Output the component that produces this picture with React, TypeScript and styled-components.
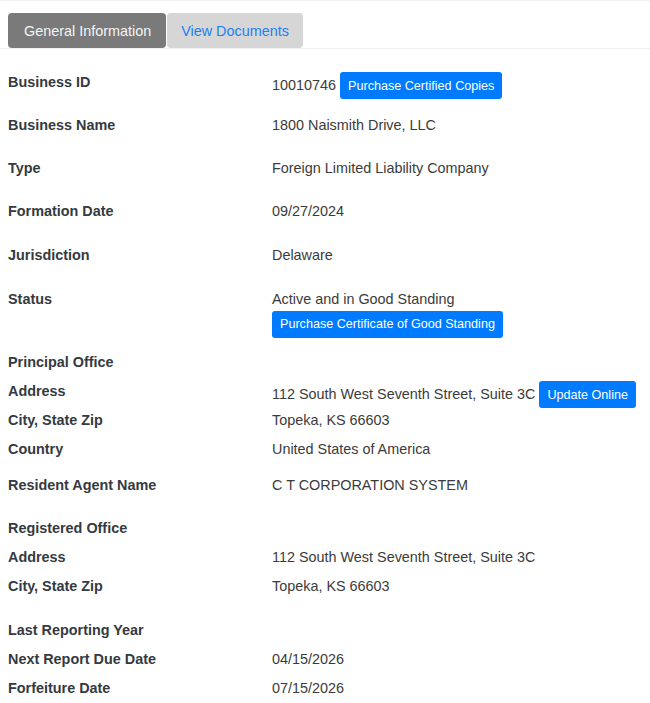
import React from "react";
import styled, { createGlobalStyle } from "styled-components";

const GlobalStyle = createGlobalStyle`
  body {
    margin: 0;
    background: #ffffff;
    font-family: "Liberation Sans", Arial, sans-serif;
  }
`;

type Detail = {
  label: string;
  value?: string;
  action?: string;
  below?: boolean;
  gap: number;
};

const details: Detail[] = [
  { label: "Business ID", value: "10010746", action: "Purchase Certified Copies", gap: 0 },
  { label: "Business Name", value: "1800 Naismith Drive, LLC", gap: 16 },
  { label: "Type", value: "Foreign Limited Liability Company", gap: 22 },
  { label: "Formation Date", value: "09/27/2024", gap: 22 },
  { label: "Jurisdiction", value: "Delaware", gap: 23 },
  {
    label: "Status",
    value: "Active and in Good Standing",
    action: "Purchase Certificate of Good Standing",
    below: true,
    gap: 22.5,
  },
  { label: "Principal Office", gap: 14.5 },
  {
    label: "Address",
    value: "112 South West Seventh Street, Suite 3C",
    action: "Update Online",
    gap: 8,
  },
  { label: "City, State Zip", value: "Topeka, KS 66603", gap: 2 },
  { label: "Country", value: "United States of America", gap: 8 },
  { label: "Resident Agent Name", value: "C T CORPORATION SYSTEM", gap: 15 },
  { label: "Registered Office", gap: 22 },
  { label: "Address", value: "112 South West Seventh Street, Suite 3C", gap: 8 },
  { label: "City, State Zip", value: "Topeka, KS 66603", gap: 8 },
  { label: "Last Reporting Year", gap: 22.5 },
  { label: "Next Report Due Date", value: "04/15/2026", gap: 8 },
  { label: "Forfeiture Date", value: "07/15/2026", gap: 8 },
];

const App: React.FC = () => {
  return (
    <Page>
      <GlobalStyle />
      <TabBar>
        <Tab active>General Information</Tab>
        <Tab>View Documents</Tab>
      </TabBar>
      <Details>
        {details.map((d, i) => (
          <Row key={i} gap={d.gap}>
            <Label>{d.label}</Label>
            {d.below ? (
              <StackValue>
                <span>{d.value}</span>
                <ActionButton>{d.action}</ActionButton>
              </StackValue>
            ) : (
              <Value>
                {d.value && <span>{d.value}</span>}
                {d.action && <ActionButton>{d.action}</ActionButton>}
              </Value>
            )}
          </Row>
        ))}
      </Details>
    </Page>
  );
};

export default App;

const Page = styled.div`
  border-top: 1px solid #f1f1f1;
  min-height: 702px;
  box-sizing: border-box;
`;

const TabBar = styled.nav`
  display: flex;
  gap: 1px;
  margin-top: 12px;
  padding: 0 8px;
  border-bottom: 1px solid #eeeeee;
`;

const Tab = styled.div<{ active?: boolean }>`
  height: 35px;
  display: flex;
  align-items: center;
  padding: ${(p) => (p.active ? "0 15px 0 16px" : "0 14px 0 14px")};
  border-radius: 4px;
  font-size: 14.4px;
  background: ${(p) => (p.active ? "#7a7a7a" : "#d6d6d6")};
  color: ${(p) => (p.active ? "#f4f4f4" : "#1c7ff5")};
  cursor: pointer;
`;

const Details = styled.div`
  padding: 23px 8px 0;
`;

const Row = styled.div<{ gap: number }>`
  display: grid;
  grid-template-columns: 264px 1fr;
  margin-top: ${(p) => p.gap}px;
  font-size: 14.4px;
  line-height: 21px;
`;

const Label = styled.div`
  font-weight: bold;
  color: #343a40;
`;

const Value = styled.div`
  display: flex;
  align-items: center;
  gap: 4px;
  color: #3b3b3b;
  min-height: 21px;
`;

const StackValue = styled.div`
  display: flex;
  flex-direction: column;
  align-items: flex-start;
  gap: 1px;
  color: #3b3b3b;
`;

const ActionButton = styled.button`
  height: 27px;
  padding: 0 8px;
  border: none;
  border-radius: 3px;
  background: #007bff;
  color: #ffffff;
  font-family: "Liberation Sans", Arial, sans-serif;
  font-size: 12.6px;
  cursor: pointer;
`;
